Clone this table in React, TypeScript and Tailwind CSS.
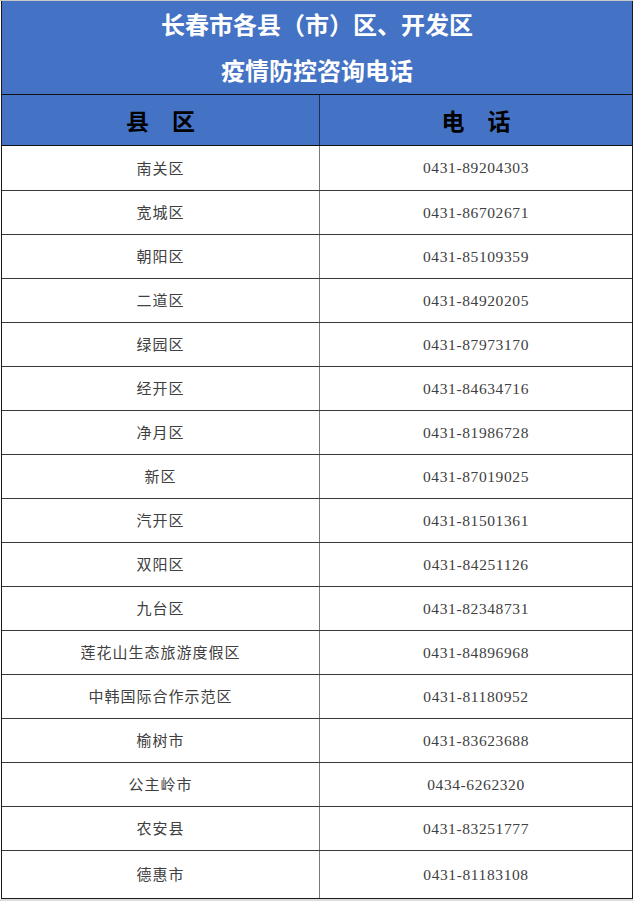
import React from 'react';

const rows: [string, string][] = [
  ['南关区', '0431-89204303'],
  ['宽城区', '0431-86702671'],
  ['朝阳区', '0431-85109359'],
  ['二道区', '0431-84920205'],
  ['绿园区', '0431-87973170'],
  ['经开区', '0431-84634716'],
  ['净月区', '0431-81986728'],
  ['新区', '0431-87019025'],
  ['汽开区', '0431-81501361'],
  ['双阳区', '0431-84251126'],
  ['九台区', '0431-82348731'],
  ['莲花山生态旅游度假区', '0431-84896968'],
  ['中韩国际合作示范区', '0431-81180952'],
  ['榆树市', '0431-83623688'],
  ['公主岭市', '0434-6262320'],
  ['农安县', '0431-83251777'],
  ['德惠市', '0431-81183108'],
];

const cjk = "font-['Noto_Sans_CJK_SC',sans-serif]";

export default function App() {
  return (
    <div className="w-[633px] h-[901px] bg-white border-t border-[#c8c8c8] flex flex-col">
      <div className="ml-[1px] w-[632px] border-l border-r border-b border-[#1a1a1a]">
        {/* 标题 */}
        <div className={`bg-[#4472c4] border-b border-[#111] pb-[1px] text-white font-bold text-[24px] text-center leading-[46px] ${cjk}`}>
          <div>长春市各县（市）区、开发区</div>
          <div>疫情防控咨询电话</div>
        </div>

        {/* 表头 */}
        <div className={`grid grid-cols-[317px_1fr] bg-[#4472c4] border-b border-[#111] h-[51px] text-black font-bold text-[23px] ${cjk}`}>
          <div className="flex items-center justify-center">县　区</div>
          <div className="flex items-center justify-center border-l border-[#1f2f4f]">电　话</div>
        </div>

        {rows.map(([name, tel], i) => {
          const last = i === rows.length - 1;
          const h = i === 0 ? 'h-[45px]' : last ? 'h-[47px]' : 'h-[44px]';
          return (
            <div
              key={name}
              className={`grid grid-cols-[317px_1fr] ${h} ${last ? '' : 'border-b border-[#3a3a3a]'} text-[#404040]`}
            >
              <div className={`flex items-center justify-center text-[15px] tracking-[1px] ${cjk}`}>
                {name}
              </div>
              <div className="flex items-center justify-center border-l border-[#7a7a7a] text-[15.5px] tracking-[0.6px] font-['Liberation_Serif',serif]">
                {tel}
              </div>
            </div>
          );
        })}
      </div>
      <div className="flex-1 bg-[#dcdcdc]" />
    </div>
  );
}
